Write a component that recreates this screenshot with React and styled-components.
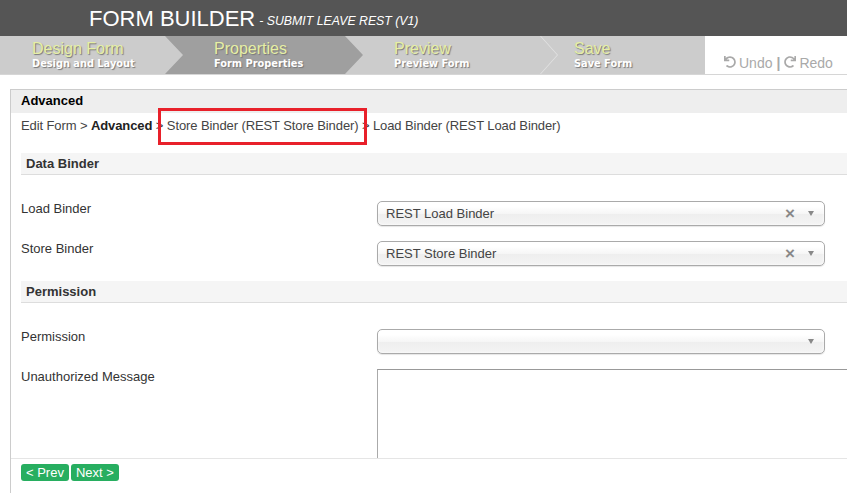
import React from 'react'
import styled, { createGlobalStyle } from 'styled-components'
import { FaUndo, FaRedo } from 'react-icons/fa'

const GlobalStyle = createGlobalStyle`
  html, body {
    margin: 0;
    padding: 0;
    background: #fff;
    overflow: hidden;
  }
  body {
    font-family: "Liberation Sans", Arial, sans-serif;
    width: 847px;
    height: 493px;
  }
`

const Page = styled.div`
  width: 847px;
  height: 493px;
  overflow: hidden;
  display: flex;
  flex-direction: column;
`

const TopBar = styled.div`
  height: 36px;
  flex: none;
  background: #555555;
  display: flex;
  align-items: center;
  padding-left: 89px;
  color: #fff;
`

const AppTitle = styled.span`
  font-size: 22px;
  line-height: 36px;
  padding-top: 1px;
`

const AppSub = styled.span`
  font-size: 12.3px;
  font-style: italic;
  margin-left: 4px;
  padding-top: 5px;
`

const StepBar = styled.div`
  height: 38px;
  flex: none;
  background: #cccccc;
  display: flex;
  border-bottom: 1px solid #d6d6d6;
  overflow: hidden;
`

const Step = styled.div`
  position: relative;
  width: 180px;
  flex: ${p => p.$last ? '1' : 'none'};
  padding-left: ${p => p.$first ? 32 : 34}px;
  box-sizing: border-box;
  display: flex;
  flex-direction: column;
  padding-top: 4px;

  &::before {
    content: '';
    display: ${p => p.$active ? 'block' : 'none'};
    position: absolute;
    left: -15px;
    top: 0;
    width: 198px;
    height: 100%;
    background: #9f9f9f;
    clip-path: polygon(0 0, 180px 0, 198px 50%, 180px 100%, 0 100%, 18px 50%);
  }

  &::after {
    content: '';
    display: ${p => p.$sep ? 'block' : 'none'};
    position: absolute;
    right: -18px;
    top: 0;
    width: 18px;
    height: 100%;
    background: #e2e2e2;
    clip-path: polygon(0 0, 1px 0, 100% 50%, 1px 100%, 0 100%, calc(100% - 1px) 50%);
  }
`

const StepTitle = styled.span`
  position: relative;
  font-size: 16px;
  line-height: 18px;
  color: #e6efa4;
  text-shadow: 1px 1px 1px #777;
`

const StepSub = styled.span`
  position: relative;
  font-family: "DejaVu Sans", Verdana, sans-serif;
  font-size: 9.8px;
  font-weight: bold;
  line-height: 12px;
  color: #fff;
  text-shadow: 1px 1px 1px #777;
`

const History = styled.div`
  width: 142px;
  flex: none;
  box-sizing: border-box;
  background: #fff;
  display: flex;
  align-items: flex-end;
  padding: 0 0 3px 19px;
  color: #a9a9a9;
  font-size: 14px;
  gap: 3px;

  svg {
    width: 12px;
    height: 12px;
    margin-bottom: 2px;
  }
`

const HistoryItem = styled.span`
  display: flex;
  align-items: center;
  gap: 3px;
`

const Pipe = styled.span`
  font-weight: bold;
  margin: 0 1px;
`

const Panel = styled.div`
  position: relative;
  margin: 14px 0 0 10px;
  width: 900px;
  flex: 1;
  border: 1px solid #cccccc;
  border-bottom: none;
  display: flex;
  flex-direction: column;
`

const PanelHeader = styled.div`
  height: 23px;
  flex: none;
  background: #eeeeee;
  padding-left: 10px;
  font-size: 13px;
  font-weight: bold;
  line-height: 22px;
  color: #000;
`

const Crumbs = styled.div`
  flex: none;
  padding: 4px 10px 0;
  font-size: 13px;
  line-height: 17px;
  color: #444;
  letter-spacing: -0.1px;

  b { color: #222; }
`

const Highlight = styled.div`
  position: absolute;
  left: 147px;
  top: 18px;
  width: 203px;
  height: 31px;
  border: 3px solid #e8202a;
`

const Content = styled.div`
  height: 324px;
  flex: none;
  box-sizing: border-box;
  overflow: hidden;
  padding: 19px 0 0 10px;
`

const SectionHeader = styled.div`
  height: 21px;
  background: #f5f5f5;
  border-bottom: 1px solid #dddddd;
  padding-left: 5px;
  font-size: 13px;
  font-weight: bold;
  line-height: 21px;
  color: #333;
`

const Fields = styled.div`
  padding-top: 26px;
`

const Row = styled.div`
  display: flex;
  margin-bottom: 15px;
`

const Label = styled.div`
  width: 356px;
  flex: none;
  font-size: 13px;
  line-height: 15px;
  color: #333;
`

const Select = styled.div`
  width: 448px;
  height: 25px;
  box-sizing: border-box;
  border: 1px solid #aaaaaa;
  border-radius: 5px;
  background: linear-gradient(#ffffff 20%, #f6f6f6 50%, #eeeeee 52%, #f4f4f4 100%);
  box-shadow: 0 0 3px #fff inset, 0 1px 1px rgba(0, 0, 0, 0.1);
  display: flex;
  align-items: center;
  padding: 0 10px 0 8px;
  font-size: 13px;
  color: #444;
`

const Value = styled.span`
  flex: 1;
`

const Clear = styled.span`
  font-size: 17px;
  font-weight: bold;
  color: #888;
  margin-right: 13px;
  line-height: 1;
`

const Caret = styled.span`
  width: 0;
  height: 0;
  border-left: 3.5px solid transparent;
  border-right: 3.5px solid transparent;
  border-top: 5px solid #888;
`

const TextBox = styled.div`
  width: 500px;
  height: 100px;
  box-sizing: border-box;
  border: 1px solid #aaaaaa;
  border-top-color: #999;
  background: #fff;
`

const Footer = styled.div`
  flex: none;
  border-top: 1px solid #e5e5e5;
  padding: 5px 10px 0;
  display: flex;
  gap: 2px;
`

const NavButton = styled.button`
  height: 17px;
  padding: 0 5px;
  border: none;
  border-radius: 3px;
  background: #27ae60;
  color: #fff;
  font-family: "Liberation Sans", Arial, sans-serif;
  font-size: 13px;
  line-height: 17px;
  cursor: pointer;
`

const steps = [
  { title: 'Design Form', sub: 'Design and Layout' },
  { title: 'Properties', sub: 'Form Properties', active: true },
  { title: 'Preview', sub: 'Preview Form', sep: true },
  { title: 'Save', sub: 'Save Form' },
]

const SelectBox = ({ value }) => (
  <Select>
    <Value>{value}</Value>
    {value && <Clear>×</Clear>}
    <Caret />
  </Select>
)

const App = () => {
  return (
    <Page>
      <GlobalStyle />
      <TopBar>
        <AppTitle>FORM BUILDER</AppTitle>
        <AppSub>- SUBMIT LEAVE REST (V1)</AppSub>
      </TopBar>

      <StepBar>
        {steps.map((s, i) => (
          <Step
            key={s.title}
            $first={i === 0}
            $last={i === steps.length - 1}
            $active={s.active}
            $sep={s.sep}
          >
            <StepTitle>{s.title}</StepTitle>
            <StepSub>{s.sub}</StepSub>
          </Step>
        ))}
        <History>
          <HistoryItem><FaUndo />Undo</HistoryItem>
          <Pipe>|</Pipe>
          <HistoryItem><FaRedo />Redo</HistoryItem>
        </History>
      </StepBar>

      <Panel>
        <PanelHeader>Advanced</PanelHeader>
        <Crumbs>
          Edit Form &gt; <b>Advanced</b> &gt; Store Binder (REST Store Binder) &gt; Load Binder (REST Load Binder)
        </Crumbs>
        <Highlight />

        <Content>
          <SectionHeader>Data Binder</SectionHeader>
          <Fields>
            <Row>
              <Label>Load Binder</Label>
              <SelectBox value="REST Load Binder" />
            </Row>
            <Row>
              <Label>Store Binder</Label>
              <SelectBox value="REST Store Binder" />
            </Row>
          </Fields>

          <SectionHeader>Permission</SectionHeader>
          <Fields>
            <Row>
              <Label>Permission</Label>
              <SelectBox value="" />
            </Row>
            <Row>
              <Label>Unauthorized Message</Label>
              <TextBox />
            </Row>
          </Fields>
        </Content>

        <Footer>
          <NavButton>&lt; Prev</NavButton>
          <NavButton>Next &gt;</NavButton>
        </Footer>
      </Panel>
    </Page>
  )
}

export default App
